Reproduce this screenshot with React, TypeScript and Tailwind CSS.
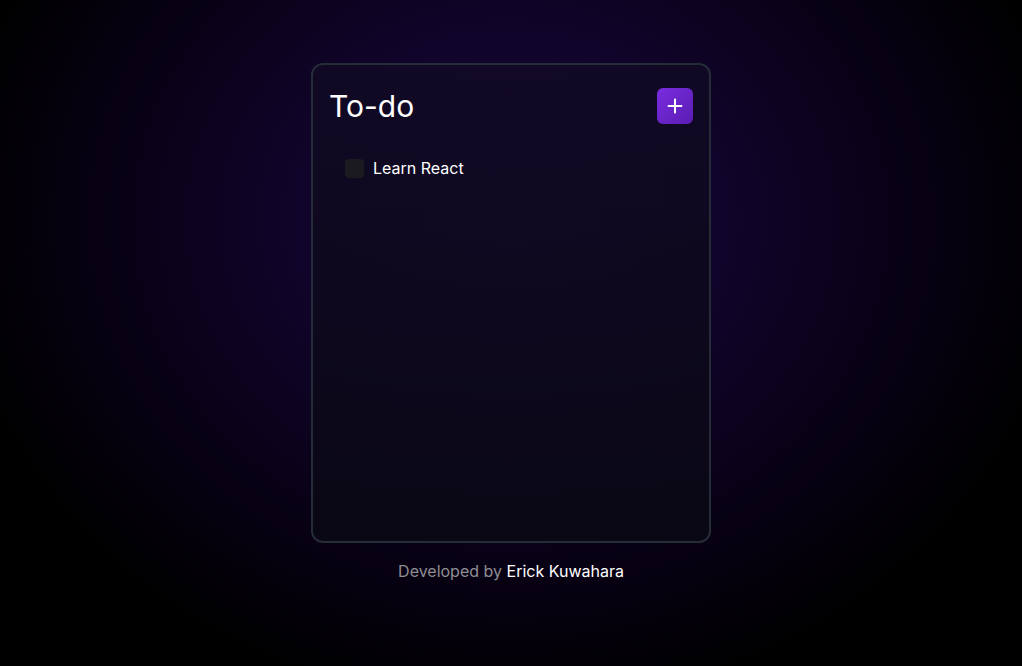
import React from 'react';
import { Plus } from 'lucide-react';

const todos = [{ id: 1, title: 'Learn React', done: false }];

const App: React.FC = () => {
  return (
    <div
      className="min-h-screen w-full flex flex-col items-center pt-[63px] bg-[radial-gradient(ellipse_at_50%_33%,#1a0738_0%,#10042a_30%,#070112_58%,#000000_78%)] font-['Inter',sans-serif]"
    >
      <div className="w-[400px] h-[480px] rounded-xl border-2 border-[#252c38] bg-[linear-gradient(180deg,rgba(17,10,36,0.85),rgba(10,8,20,0.9))] pl-4 pr-4 pt-[23px]">
        <div className="flex items-center justify-between">
          <h1 className="text-3xl text-white">To-do</h1>
          <button className="w-9 h-9 rounded-md bg-gradient-to-br from-[#7a2de0] to-[#5a1cb2] flex items-center justify-center text-white">
            <Plus size={22} strokeWidth={2.25} />
          </button>
        </div>

        <ul className="mt-[32px] pl-4 space-y-3">
          {todos.map((todo) => (
            <li key={todo.id} className="flex items-center gap-[9px]">
              <span className="w-[19px] h-[19px] rounded bg-[#1b1a1f] shrink-0"></span>
              <span className="text-base text-white">{todo.title}</span>
            </li>
          ))}
        </ul>
      </div>

      <p className="mt-4 text-base text-[#8e8e93]">
        Developed by <span className="text-white">Erick Kuwahara</span>
      </p>
    </div>
  );
};

export default App;
